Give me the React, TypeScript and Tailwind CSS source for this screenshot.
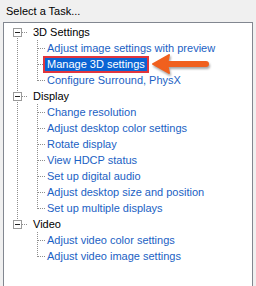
import React from 'react'

type Group = { title: string; items: string[]; selected?: number }

const groups: Group[] = [
  {
    title: '3D Settings',
    items: ['Adjust image settings with preview', 'Manage 3D settings', 'Configure Surround, PhysX'],
    selected: 1,
  },
  {
    title: 'Display',
    items: [
      'Change resolution',
      'Adjust desktop color settings',
      'Rotate display',
      'View HDCP status',
      'Set up digital audio',
      'Adjust desktop size and position',
      'Set up multiple displays',
    ],
  },
  { title: 'Video', items: ['Adjust video color settings', 'Adjust video image settings'] },
]

const DOT = '#8e8e8e'

// connector + minus box for a category row
function GroupGutter({ first, last }: { first: boolean; last: boolean }) {
  return (
    <svg width="25" height="16" className="shrink-0" shapeRendering="crispEdges">
      {!first && <line x1="13.5" y1="0" x2="13.5" y2="5" stroke={DOT} strokeDasharray="1 1" />}
      {!last && <line x1="13.5" y1="12" x2="13.5" y2="16" stroke={DOT} strokeDasharray="1 1" />}
      <line x1="18" y1="8.5" x2="24" y2="8.5" stroke={DOT} strokeDasharray="1 1" />
      <rect x="9.5" y="4.5" width="8" height="8" fill="#fff" stroke="#9a9a9a" />
      <line x1="11" y1="8.5" x2="16" y2="8.5" stroke="#222" />
    </svg>
  )
}

function ItemGutter({ rootLine, lastChild }: { rootLine: boolean; lastChild: boolean }) {
  return (
    <svg width="41" height="16" className="shrink-0" shapeRendering="crispEdges">
      {rootLine && <line x1="13.5" y1="0" x2="13.5" y2="16" stroke={DOT} strokeDasharray="1 1" />}
      <line x1="33.5" y1="0" x2="33.5" y2={lastChild ? 9 : 16} stroke={DOT} strokeDasharray="1 1" />
      <line x1="34" y1="8.5" x2="41" y2="8.5" stroke={DOT} strokeDasharray="1 1" />
    </svg>
  )
}

export default function App() {
  return (
    <div
      className="relative flex h-[286px] w-[256px] flex-col overflow-hidden bg-[#f0f0f0] text-[11px]"
      style={{ fontFamily: '"Liberation Sans", Arial, sans-serif' }}
    >
      <div className="flex h-[22px] shrink-0 items-center pl-[6px] text-black">Select a Task...</div>

      <div className="ml-[3px] w-[250px] flex-1 border border-b-0 border-[#828790] bg-white pt-[1px]">
        {groups.map((g, gi) => {
          const lastGroup = gi === groups.length - 1
          return (
            <div key={g.title}>
              <div className="flex h-4 items-center">
                <GroupGutter first={gi === 0} last={lastGroup} />
                <span className="pl-[4px] leading-4 text-black">{g.title}</span>
              </div>
              {g.items.map((item, ii) => {
                const sel = g.selected === ii
                return (
                  <div key={item} className="flex h-4 items-center">
                    <ItemGutter rootLine={!lastGroup} lastChild={ii === g.items.length - 1} />
                    <span
                      className={
                        sel
                          ? 'h-[13px] px-[2px] leading-[13px] whitespace-nowrap bg-[#0a64d4] text-white ring-2 ring-[#e1353d]'
                          : 'h-[13px] px-[2px] leading-[13px] whitespace-nowrap text-[#1b5fc4]'
                      }
                    >
                      {item}
                    </span>
                  </div>
                )
              })}
            </div>
          )
        })}
      </div>

      {/* annotation arrow */}
      <svg
        width="66"
        height="30"
        viewBox="0 0 66 30"
        className="absolute left-[148px] top-[50px] drop-shadow-[1px_2px_1px_rgba(0,0,0,0.35)]"
      >
        <line x1="20" y1="14" x2="58" y2="14" stroke="#f0601e" strokeWidth="6" strokeLinecap="round" />
        <polygon points="5,14 21,5 19,14 21,23" fill="#f0601e" stroke="#f0601e" strokeWidth="2" strokeLinejoin="round" />
      </svg>
    </div>
  )
}
